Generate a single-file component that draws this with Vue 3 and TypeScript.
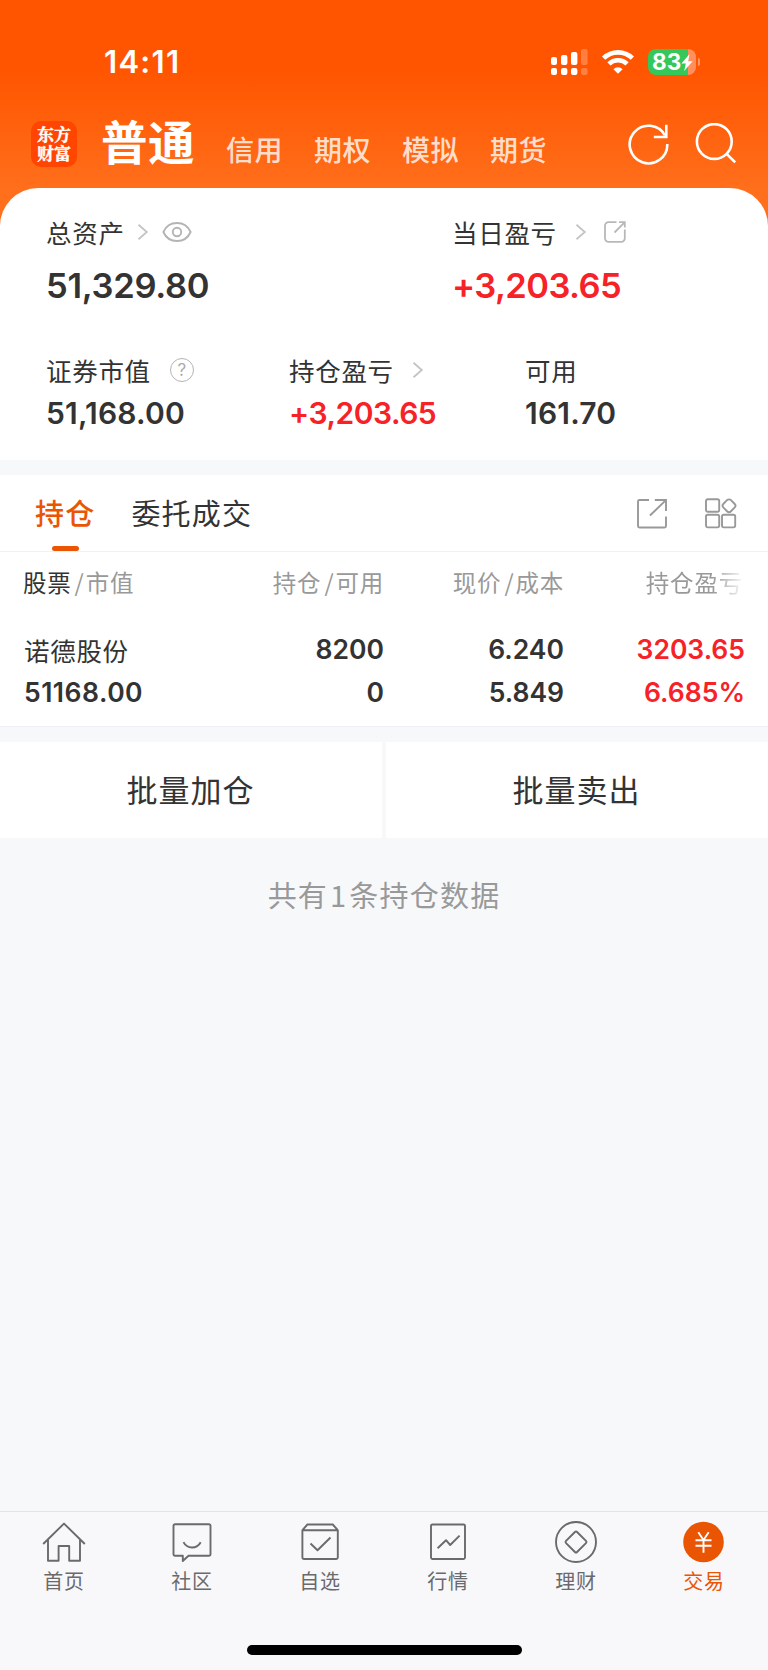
<script setup lang="ts">
interface Holding {
  name: string
  value: string
  amount: string
  available: string
  price: string
  cost: string
  profit: string
  ratio: string
}

const accounts: string[] = ['信用', '期权', '模拟', '期货']

const holdings: Holding[] = [
  {
    name: '诺德股份',
    value: '51168.00',
    amount: '8200',
    available: '0',
    price: '6.240',
    cost: '5.849',
    profit: '3203.65',
    ratio: '6.685%',
  },
]

const navItems: { key: string; label: string }[] = [
  { key: 'home', label: '首页' },
  { key: 'community', label: '社区' },
  { key: 'watch', label: '自选' },
  { key: 'market', label: '行情' },
  { key: 'wealth', label: '理财' },
  { key: 'trade', label: '交易' },
]
</script>

<template>
  <div class="screen">
    <header class="top">
      <div class="status">
        <span class="time">14:11</span>
        <div class="status-icons">
          <svg class="signal" width="38" height="28" viewBox="0 0 38 28" fill="#fff">
            <rect x="1" y="9" width="6" height="8" rx="2" />
            <rect x="11" y="7" width="6.4" height="10" rx="2" />
            <rect x="21" y="4" width="6.4" height="13" rx="2" />
            <rect x="31" y="1" width="6.6" height="16" rx="2" opacity="0.25" />
            <rect x="1" y="20" width="6" height="7" rx="2" />
            <rect x="11" y="20" width="6.4" height="7" rx="2" />
            <rect x="21" y="20" width="6.4" height="7" rx="2" />
            <rect x="31" y="20" width="6.6" height="7" rx="2" opacity="0.25" />
          </svg>
          <svg class="wifi" width="32" height="24" viewBox="0 0 32 24" fill="none" stroke="#fff" stroke-width="4.6">
            <path d="M1.600 8.200a20.600 20.600 0 0 1 28.800 0" />
            <path d="M6.900 13.900a13 13 0 0 1 18.200 0" />
            <path d="M16 23.800l-4.600-4.600a6.600 6.600 0 0 1 9.200 0z" fill="#fff" stroke="none" />
          </svg>
          <div class="battery">
            <span class="level">83</span>
            <svg class="bolt" width="12" height="17" viewBox="0 0 12 17" fill="#fff">
              <path d="M8.600 0L0.400 9.400h4.400L3.200 17L11.600 7.200H7.200z" />
            </svg>
          </div>
          <span class="battery-tip"></span>
        </div>
      </div>
      <div class="title-bar">
        <div class="logo"><span>东方财富</span></div>
        <h1 class="title">普通</h1>
        <nav class="accounts">
          <span v-for="a in accounts" :key="a">{{ a }}</span>
        </nav>
        <svg class="refresh" width="42" height="42" viewBox="0 0 42 42" fill="none" stroke="#fff" stroke-width="2.600">
          <path d="M39.300 21A18.800 18.800 0 1 1 37 12.500" />
          <path d="M38.300 1.800v12.200H25.800" />
        </svg>
        <svg class="search" width="42" height="42" viewBox="0 0 42 42" fill="none" stroke="#fff" stroke-width="2.600">
          <circle cx="19.300" cy="18.500" r="17.400" />
          <path d="M31.400 30.600l8.800 8.800" />
        </svg>
      </div>
    </header>

    <section class="assets">
      <div class="row primary">
        <div class="cell">
          <div class="label">
            <span>总资产</span>
            <svg class="chev" width="12" height="18" viewBox="0 0 12 18"><path d="M1.500 1.800L9.800 9l-8.300 7.200" /></svg>
            <svg class="eye" width="30" height="22" viewBox="0 0 30 22" fill="none" stroke="#b4b4b4" stroke-width="1.900">
              <path d="M1.400 11C4 5 9 2 15 2s11 3 13.600 9c-2.600 6-7.600 9-13.600 9S4 17 1.400 11z" />
              <circle cx="15" cy="11" r="4.200" />
            </svg>
          </div>
          <div class="number">51,329.80</div>
        </div>
        <div class="cell">
          <div class="label">
            <span>当日盈亏</span>
            <svg class="chev wide" width="12" height="18" viewBox="0 0 12 18"><path d="M1.500 1.800L9.800 9l-8.300 7.200" /></svg>
            <svg class="share" width="22" height="22" viewBox="0 0 22 22" fill="none" stroke="#b8b8b8" stroke-width="1.800">
              <path d="M12.500 1.200H4.500A3.500 3.500 0 0 0 1 4.700v12.600a3.500 3.500 0 0 0 3.500 3.500h12.800a3.500 3.500 0 0 0 3.500-3.500V8.500" />
              <path d="M10.500 11.500L20.600 1.400M15 1.200h5.800V6.500" />
            </svg>
          </div>
          <div class="number up">+3,203.65</div>
        </div>
      </div>
      <div class="row secondary">
        <div class="cell">
          <div class="label">
            <span>证券市值</span>
            <span class="help">?</span>
          </div>
          <div class="number">51,168.00</div>
        </div>
        <div class="cell">
          <div class="label">
            <span>持仓盈亏</span>
            <svg class="chev wide" width="12" height="18" viewBox="0 0 12 18"><path d="M1.500 1.800L9.800 9l-8.300 7.200" /></svg>
          </div>
          <div class="number up">+3,203.65</div>
        </div>
        <div class="cell">
          <div class="label"><span>可用</span></div>
          <div class="number">161.70</div>
        </div>
      </div>
    </section>

    <section class="positions">
      <div class="tabs">
        <span class="tab active">持仓</span>
        <span class="tab">委托成交</span>
        <svg class="open" width="30" height="30" viewBox="0 0 30 30" fill="none" stroke="#999" stroke-width="1.900">
          <path d="M12 1H2.500A1.500 1.500 0 0 0 1 2.500v24.500a1.500 1.500 0 0 0 1.500 1.500h25a1.500 1.500 0 0 0 1.500-1.500V17.500" />
          <path d="M13 16.500L28.400 1.600M17.800 1H29v11" />
        </svg>
        <svg class="grid" width="32" height="31" viewBox="0 0 32 31" fill="none" stroke="#999" stroke-width="1.900">
          <rect x="1" y="1.200" width="13.200" height="12.600" rx="1.800" />
          <rect x="1" y="16.800" width="13.200" height="12.600" rx="1.800" />
          <rect x="17" y="16.800" width="13.200" height="12.600" rx="1.800" />
          <rect x="18.700" y="2.400" width="10.600" height="10.600" rx="2.800" transform="rotate(45 24 7.700)" />
        </svg>
      </div>
      <div class="table">
        <div class="thead">
          <span class="c1"><b>股票</b><i>/</i>市值</span>
          <span class="c2">持仓<i>/</i>可用</span>
          <span class="c3">现价<i>/</i>成本</span>
          <span class="c4 fade">持仓盈亏</span>
        </div>
        <div v-for="h in holdings" :key="h.name" class="holding">
          <div class="c1"><span class="name">{{ h.name }}</span><span>{{ h.value }}</span></div>
          <div class="c2"><span>{{ h.amount }}</span><span>{{ h.available }}</span></div>
          <div class="c3"><span>{{ h.price }}</span><span>{{ h.cost }}</span></div>
          <div class="c4 up"><span>{{ h.profit }}</span><span>{{ h.ratio }}</span></div>
        </div>
      </div>
    </section>

    <div class="actions">
      <button type="button">批量加仓</button>
      <button type="button">批量卖出</button>
    </div>
    <p class="summary">共有<em>{{ holdings.length }}</em>条持仓数据</p>

    <footer class="bottom">
      <nav class="nav">
        <div v-for="n in navItems" :key="n.key" class="nav-item" :class="{ current: n.key === 'trade' }">
          <svg width="44" height="44" viewBox="0 0 44 44" fill="none" stroke="#6a6a6c" stroke-width="1.900" stroke-linejoin="round">
            <template v-if="n.key === 'home'">
              <path d="M1.200 23L22 2.600L42.800 23" />
              <path d="M6 19v20.800h10.600V25h10.600v14.800H38V19" />
            </template>
            <template v-else-if="n.key === 'community'">
              <path d="M5 3.200h34a1.500 1.500 0 0 1 1.500 1.500v28.600a1.500 1.500 0 0 1-1.500 1.500H18.500L12.800 40v-5.200H5a1.500 1.500 0 0 1-1.500-1.500V4.700A1.500 1.500 0 0 1 5 3.200z" />
              <path d="M13.500 21.200c3.500 7 13.500 7 17.200 0" />
            </template>
            <template v-else-if="n.key === 'watch'">
              <path d="M4.400 9.200h35.400v27a1.800 1.800 0 0 1-1.800 1.800H6.200a1.800 1.800 0 0 1-1.800-1.800zM4.400 9.200l5-5.700h25.400l5 5.700" />
              <path d="M12.500 22.500l7 6.800L32.500 16.500" />
            </template>
            <template v-else-if="n.key === 'market'">
              <rect x="5" y="3.500" width="34" height="34.500" rx="1.500" />
              <path d="M11.600 27.200l8.400-8l4.200 4.800l9.400-9.400" />
            </template>
            <template v-else-if="n.key === 'wealth'">
              <circle cx="22" cy="21" r="20" />
              <rect x="14.200" y="13.200" width="15.600" height="15.600" rx="1.500" transform="rotate(45 22 21)" />
            </template>
            <template v-else>
              <circle cx="21.500" cy="21" r="20.300" fill="#ea5504" stroke="none" />
              <path d="M16.300 11.200L21.500 19L26.700 11.200M21.500 19v12.800M13.500 19.200h16M13.500 24.800h16" stroke="#fff" />
            </template>
          </svg>
          <span>{{ n.label }}</span>
        </div>
      </nav>
      <div class="home-indicator"></div>
    </footer>
  </div>
</template>

<style>
body {
  margin: 0;
  background: #f7f8fa;
}
</style>

<style scoped>
.screen {
  width: 768px;
  height: 1670px;
  display: flex;
  flex-direction: column;
  overflow: hidden;
  background: #f7f8fa;
  color: #333;
  font-family: 'Noto Sans CJK SC', sans-serif;
}
svg {
  display: block;
  flex: none;
}
.top {
  height: 240px;
  margin-bottom: -52px;
  background: linear-gradient(#ff5500 0, #ff5500 70px, #ff6f1c 190px);
  color: #fff;
}
.status {
  display: flex;
  align-items: center;
  height: 46px;
  padding: 39px 0 20px 104px;
}
.time {
  width: 446px;
  font: 600 31px/48px Inter, sans-serif;
  letter-spacing: 1.300px;
}
.status-icons {
  display: flex;
  align-items: center;
}
.wifi {
  margin-left: 14px;
}
.battery {
  display: flex;
  align-items: center;
  width: 48px;
  height: 26px;
  margin-left: 14px;
  border-radius: 8px;
  background: linear-gradient(90deg, #34c759 40px, #ff8f5c 40px);
}
.level {
  margin-left: 4px;
  font: 700 22.500px/26px Inter, sans-serif;
  letter-spacing: 0;
}
.battery-tip {
  width: 2px;
  height: 8px;
  margin-left: 2px;
  border-radius: 0 3px 3px 0;
  background: #ff9465;
}
.title-bar {
  display: flex;
  align-items: center;
  height: 77px;
  padding-left: 31px;
}
.logo {
  display: flex;
  align-items: center;
  justify-content: center;
  width: 46px;
  height: 46px;
  border-radius: 10px;
  background: #ff4500;
  font: 700 17px/19px 'Noto Serif CJK SC', 'Noto Sans CJK SC', sans-serif;
  -webkit-text-stroke: 0.400px #fff;
}
.logo span {
  width: 34px;
  margin-top: -1px;
  word-break: break-all;
}
.title {
  margin: -8px 0 0 24px;
  width: 125px;
  font-size: 46.500px;
  line-height: 76px;
  font-weight: 700;
  letter-spacing: 0.500px;
}
.accounts {
  display: flex;
  width: 402px;
  font-size: 28px;
  font-weight: 500;
  line-height: 40px;
  letter-spacing: 0.500px;
  padding-top: 11px;
  color: rgba(255, 255, 255, 0.8);
}
.accounts span {
  width: 88px;
}
.search {
  margin-left: 25px;
}
.assets {
  height: 272px;
  border-radius: 38px 38px 0 0;
  background: #fff;
}
.row {
  display: grid;
  padding-left: 46px;
}
.primary {
  grid-template-columns: 406px 1fr;
  padding-top: 24px;
}
.secondary {
  grid-template-columns: 243px 236px 1fr;
  padding-top: 30px;
}
.label {
  display: flex;
  align-items: center;
  height: 40px;
  font-size: 25.500px;
  line-height: 38px;
  letter-spacing: 0.700px;
}
.label > span:first-child {
  margin-top: -1px;
}
.chev {
  margin-left: 12px;
  fill: none;
  stroke: #c4c4c4;
  stroke-width: 1.800;
}
.chev.wide {
  margin-left: 18px;
}
.eye {
  margin-left: 13px;
}
.share {
  margin-left: 17px;
}
.help {
  width: 22px;
  height: 22px;
  margin-left: 19px;
  border: 1.500px solid #b4b4b4;
  border-radius: 50%;
  text-align: center;
  font: 400 17px/22px Inter, sans-serif;
  letter-spacing: 0;
  color: #aaa;
}
.number {
  font: 600 34.500px/68px Inter, sans-serif;
  letter-spacing: -0.300px;
}
.number.up {
  letter-spacing: -0.600px;
}
.secondary .number {
  font-size: 30px;
  line-height: 46px;
  letter-spacing: 0.200px;
}
.secondary .number.up {
  letter-spacing: -0.500px;
}
.up {
  color: #f72227;
}
.positions {
  margin-top: 15px;
  height: 251px;
  background: #fff;
  border-bottom: 1px solid #eef0f3;
}
.tabs {
  display: flex;
  align-items: center;
  height: 76px;
  padding-left: 35px;
  border-bottom: 1px solid #f0f1f3;
}
.tab {
  position: relative;
  font-size: 29px;
  line-height: 75px;
  height: 76px;
  letter-spacing: 1.200px;
  margin-right: 36px;
}
.tab.active {
  color: #ea5504;
  font-weight: 500;
}
.tab.active::after {
  content: '';
  position: absolute;
  left: 17px;
  bottom: 0;
  width: 27px;
  height: 5px;
  border-radius: 3px;
  background: #ea5504;
}
.open {
  margin: 1px 0 0 auto;
}
.grid {
  margin: 1px 31px 0 38px;
}
.thead,
.holding {
  display: grid;
  grid-template-columns: 200px 161px 180px 181px;
  padding: 0 23px;
}
.thead {
  height: 62px;
  font-size: 23.500px;
  line-height: 60px;
  letter-spacing: 0.800px;
  color: #999;
}
.thead b {
  font-weight: 400;
  color: #333;
}
.thead i {
  margin: 0 1px 0 3px;
  font-style: normal;
}
.c2,
.c3,
.c4 {
  text-align: right;
}
.thead .c4 {
  margin-right: 2px;
}
.fade {
  -webkit-mask-image: linear-gradient(90deg, #000 148px, rgba(0, 0, 0, 0.1) 178px);
  mask-image: linear-gradient(90deg, #000 148px, rgba(0, 0, 0, 0.1) 178px);
}
.holding {
  padding-top: 14px;
  font: 600 26.500px/43px Inter, sans-serif;
}
.holding span {
  display: block;
  height: 43px;
}
.holding .c1 {
  padding-left: 1px;
  letter-spacing: 0.500px;
}
.holding .name {
  font: 400 25.500px/43px 'Noto Sans CJK SC', sans-serif;
  letter-spacing: 0.700px;
}
.actions {
  display: grid;
  grid-template-columns: 1fr 1fr;
  gap: 4px;
  height: 96px;
  margin-top: 15px;
}
.actions button {
  border: 0;
  padding: 0 1px 2px 0;
  background: #fff;
  color: #333;
  font: 400 31px/94px 'Noto Sans CJK SC', sans-serif;
  letter-spacing: 1px;
}
.summary {
  margin: 28px 0 0;
  text-align: center;
  font-size: 29px;
  line-height: 56px;
  letter-spacing: 1.200px;
  color: #999;
}
.summary em {
  margin: 0 2px;
  font-style: normal;
}
.bottom {
  margin-top: auto;
  height: 158px;
  border-top: 1px solid #e2e3e5;
  background: #f8f8fb;
}
.nav {
  display: grid;
  grid-template-columns: repeat(6, 1fr);
  padding-top: 9px;
}
.nav-item {
  display: flex;
  flex-direction: column;
  align-items: center;
  font-size: 20px;
  line-height: 32px;
  letter-spacing: 0.800px;
  color: #6a6a6c;
}
.nav-item.current {
  color: #ea5504;
}
.home-indicator {
  width: 275px;
  height: 10px;
  margin: 48px auto 0;
  border-radius: 5px;
  background: #000;
}
</style>
